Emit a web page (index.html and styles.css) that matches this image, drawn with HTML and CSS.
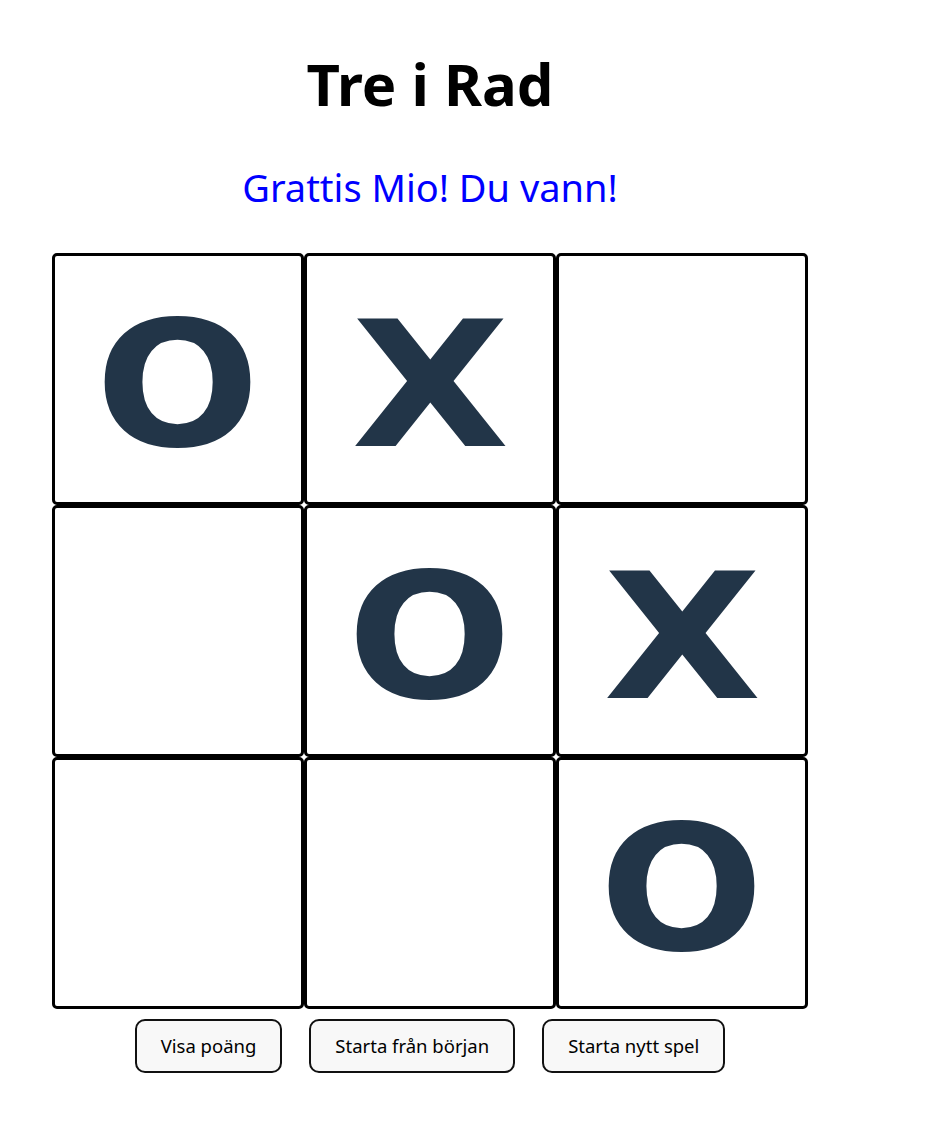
FILE: index.html
```html
<!DOCTYPE html>
<html lang="sv">
<head>
<meta charset="utf-8">
<title>Tre i Rad</title>
<link rel="stylesheet" href="styles.css">
</head>
<body>
<div class="app">
  <h1 class="title">Tre i Rad</h1>
  <p class="status">Grattis Mio! Du vann!</p>
  <div class="board">
    <div class="cell"><span class="mark mark-o">O</span></div>
    <div class="cell"><span class="mark mark-x">X</span></div>
    <div class="cell"></div>
    <div class="cell"></div>
    <div class="cell"><span class="mark mark-o">O</span></div>
    <div class="cell"><span class="mark mark-x">X</span></div>
    <div class="cell"></div>
    <div class="cell"></div>
    <div class="cell"><span class="mark mark-o">O</span></div>
  </div>
  <div class="controls">
    <button class="btn">Visa poäng</button>
    <button class="btn">Starta från början</button>
    <button class="btn">Starta nytt spel</button>
  </div>
</div>
</body>
</html>
```

FILE: styles.css
```css
body {
  margin: 8px;
  background: #ffffff;
  font-family: "Noto Sans", "Open Sans", sans-serif;
}

.app {
  width: 844px;
  display: flex;
  flex-direction: column;
  align-items: center;
}

.title {
  margin: 40px 0 0;
  font-size: 58px;
  font-weight: 700;
  line-height: 1.25;
  color: #000;
}

.status {
  margin: 42px 0 0;
  font-size: 38px;
  line-height: 1.3;
  color: #0000ff;
}

.board {
  margin-top: 41px;
  display: grid;
  grid-template-columns: repeat(3, 252px);
  grid-template-rows: repeat(3, 252px);
}

.cell {
  box-sizing: border-box;
  border: 3px solid #000;
  border-radius: 5px;
  display: flex;
  align-items: center;
  justify-content: center;
}

.mark {
  display: inline-block;
  font-family: "DejaVu Sans", sans-serif;
  font-weight: 700;
  font-size: 185px;
  line-height: 1;
  color: #223548;
}

.mark-o {
  transform: translateY(8px) scale(1.05, 0.94);
}

.mark-x {
  transform: translateY(8px) scale(1.11, 0.94);
}

.controls {
  margin-top: 10px;
  display: flex;
  gap: 27px;
}

.btn {
  height: 54px;
  padding: 0 24px;
  font-family: "Noto Sans", "Open Sans", sans-serif;
  font-size: 18.5px;
  color: #000;
  background: #f8f8f8;
  border: 2px solid #111;
  border-radius: 10px;
}
```
